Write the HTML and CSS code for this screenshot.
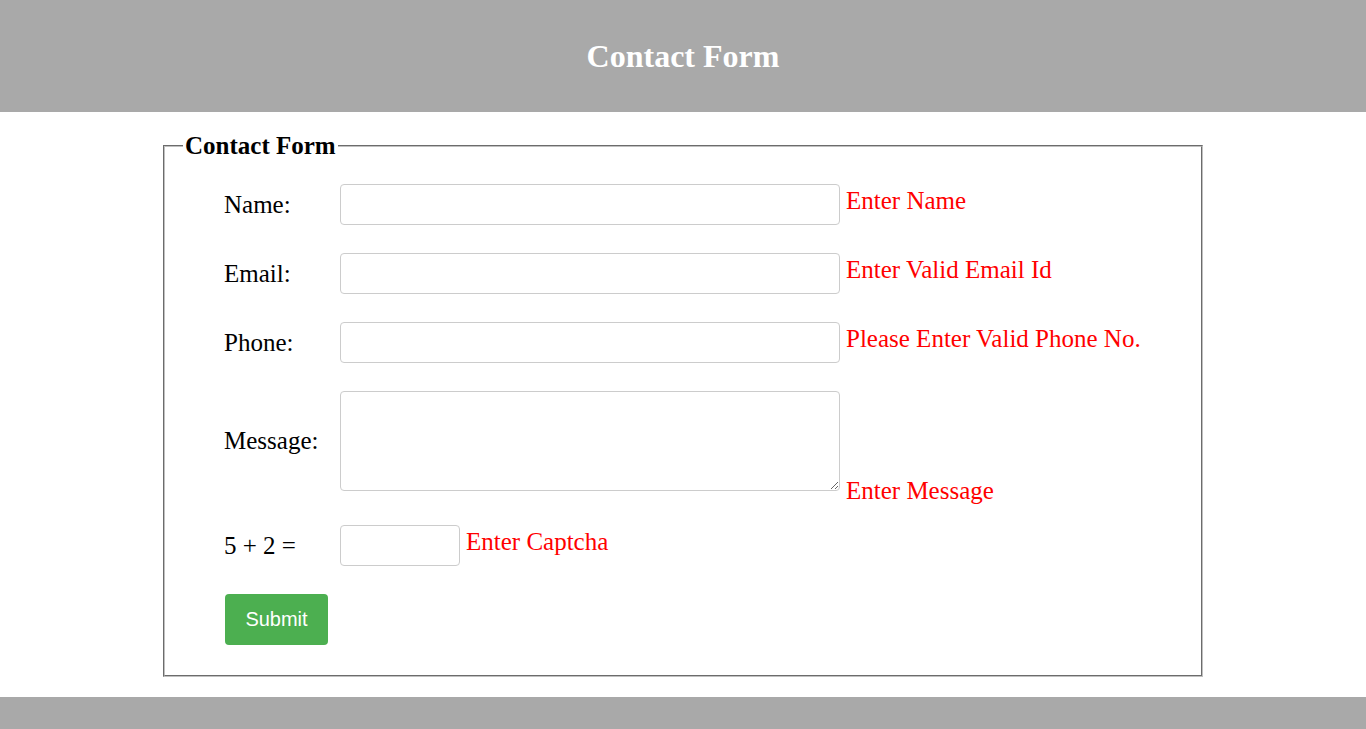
FILE: index.html
```html
<!DOCTYPE html>
<html lang="en">
  <head>
    <meta charset="UTF-8" />
    <meta name="viewport" content="width=device-width, initial-scale=1.0" />
    <title>Contact Form</title>
    <link rel="stylesheet" href="styles.css">
  </head>
  <body>
    <div class="header">
      <h1>Contact Form</h1>
    </div>

    <form class="contact-form" action="#" onsubmit="return false;">
      <fieldset>
        <legend>Contact Form</legend>

        <div class="row">
          <label for="name">Name:</label>
          <div class="field">
            <input type="text" id="name" class="text-input" />
            <span class="error">Enter Name</span>
          </div>
        </div>

        <div class="row">
          <label for="email">Email:</label>
          <div class="field">
            <input type="text" id="email" class="text-input" />
            <span class="error">Enter Valid Email Id</span>
          </div>
        </div>

        <div class="row">
          <label for="phone">Phone:</label>
          <div class="field">
            <input type="text" id="phone" class="text-input" />
            <span class="error">Please Enter Valid Phone No.</span>
          </div>
        </div>

        <div class="row row-message">
          <label for="message">Message:</label>
          <div class="field">
            <textarea id="message" class="text-area"></textarea>
            <span class="error">Enter Message</span>
          </div>
        </div>

        <div class="row">
          <label for="captcha">5 + 2 =</label>
          <div class="field">
            <input type="text" id="captcha" class="text-input captcha" />
            <span class="error">Enter Captcha</span>
          </div>
        </div>

        <div class="row row-submit">
          <button type="submit" class="submit-btn">Submit</button>
        </div>
      </fieldset>
    </form>

    <div class="footer"></div>
  </body>
</html>
```

FILE: styles.css
```css
body {
  font-family: "Liberation Serif", "Times New Roman", serif;
  background-color: #fff;
  color: #000;
  margin: 0;
  padding: 0;
}
.header {
  background-color: #a9a9a9;
  height: 112px;
  display: flex;
  align-items: center;
  justify-content: center;
}
.header h1 {
  margin: 0;
  color: #fff;
  font-size: 32px;
  font-weight: bold;
}
.contact-form {
  width: 1040px;
  margin: 20px auto 20px;
}
fieldset {
  margin: 0;
  padding: 24px 20px 30px 18px;
  border: 2px groove #c0c0c0;
}
legend {
  font-size: 25px;
  font-weight: bold;
  padding: 0 2px;
}
.row {
  display: flex;
  align-items: center;
  margin-left: 41px;
  margin-bottom: 28px;
  font-size: 25px;
}
.row label {
  width: 116px;
  flex: none;
}
.field {
  display: flex;
  align-items: baseline;
}
.row-message .field {
  align-items: flex-end;
}
.row-message {
  margin-bottom: 34px;
}
.row-message .error {
  margin-bottom: -14px;
}
.text-input {
  width: 500px;
  height: 41px;
  box-sizing: border-box;
  border: 1px solid #ccc;
  border-radius: 4px;
  padding: 6px 10px;
  margin: 0;
  font-family: Arial, "Liberation Sans", sans-serif;
  font-size: 13px;
}
.text-input.captcha {
  width: 120px;
}
.text-area {
  width: 500px;
  height: 100px;
  box-sizing: border-box;
  border: 1px solid #ccc;
  border-radius: 4px;
  padding: 6px 10px;
  margin: 0;
  font-family: Arial, "Liberation Sans", sans-serif;
  font-size: 13px;
  resize: vertical;
}
.error {
  color: #f00;
  margin-left: 6px;
  white-space: nowrap;
}
.row-submit {
  margin-bottom: 0;
  margin-left: 42px;
}
.submit-btn {
  background-color: #4caf50;
  color: #fff;
  border: none;
  border-radius: 4px;
  font-family: "Liberation Sans", Arial, sans-serif;
  font-size: 20px;
  width: 103px;
  height: 51px;
  padding: 0;
  cursor: pointer;
}
.footer {
  background-color: #a9a9a9;
  height: 60px;
}
```
